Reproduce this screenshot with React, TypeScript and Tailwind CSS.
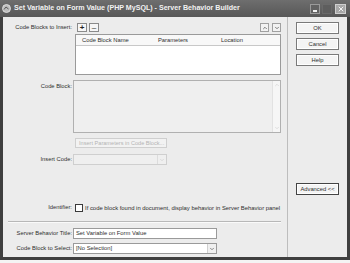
import { ChevronDown, ChevronUp, X } from "lucide-react";

const font = { fontFamily: '"Liberation Sans", Arial, sans-serif' };

function Label({ children }: { children: React.ReactNode }) {
  return (
    <div className="w-[70px] shrink-0 pr-[1px] text-right text-[5.8px] leading-none text-[#2e2e2e]">
      {children}
    </div>
  );
}

function SideButton({ children, className = "" }: { children: React.ReactNode; className?: string }) {
  return (
    <div
      className={`ml-[8px] flex h-[12px] w-[43px] items-center justify-center border border-[#7a7a7a] bg-[#f4f4f4] text-[5.8px] text-[#2e2e2e] shadow-[inset_0_0_0_1px_#fff] ${className}`}
    >
      {children}
    </div>
  );
}

function TitleBar() {
  return (
    <div className="flex h-[17px] shrink-0 items-center bg-gradient-to-b from-[#6e6e6e] to-[#575757] pl-[2px] pr-[4px]">
      <svg width="9" height="9" viewBox="0 0 9 9" className="shrink-0">
        <circle cx="4.5" cy="4.5" r="4" fill="#bdbdbd" stroke="#e8e8e8" strokeWidth="0.8" />
        <path d="M2 5.5 L4 3 L6.5 5" stroke="#555" strokeWidth="1" fill="none" />
      </svg>
      <span className="ml-[3px] whitespace-nowrap text-[7.1px] font-bold text-[#f2f2f2]">
        Set Variable on Form Value (PHP MySQL) - Server Behavior Builder
      </span>
      <div className="ml-auto flex items-center gap-[2px]">
        <div className="flex h-[10px] w-[10px] items-end justify-start border border-[#9a9a9a] bg-[#626262] pb-[1px] pl-[2px]">
          <div className="h-[2px] w-[4px] bg-[#f0f0f0]" />
        </div>
        <div className="h-[10px] w-[10px] border border-[#6a6a6a] bg-[#5e5e5e]" />
        <div className="ml-[1px] flex h-[10px] w-[11px] items-center justify-center border border-[#d0d0d0] bg-[#a8a8a8]">
          <X size={8} strokeWidth={3} color="#f4f4f4" />
        </div>
      </div>
    </div>
  );
}

export default function App() {
  return (
    <div className="h-[263px] w-[350px] overflow-hidden bg-[#f4f4f4]" style={font}>
      <div className="flex h-[260px] flex-col bg-[#3f3f3f]">
        <TitleBar />
        <div className="mx-[3px] mb-[3px] flex flex-1 bg-[#ececec]">
          {/* form area */}
          <div className="flex w-[285px] flex-col border-r border-[#bdbdbd]">
            <div className="mt-[6px] flex h-[9px] items-center">
              <Label>Code Blocks to Insert:</Label>
              <div className="ml-[4px] flex h-[9px] w-[10px] items-center justify-center border border-[#8a8a8a] bg-[#f6f6f6] text-[8px] font-bold leading-none text-[#222]">
                +
              </div>
              <div className="ml-[2px] flex h-[9px] w-[10px] items-center justify-center border border-[#8a8a8a] bg-[#f6f6f6] text-[8px] leading-none text-[#222]">
                –
              </div>
              <div className="ml-auto flex h-[9px] w-[9px] items-center justify-center border border-[#a0a0a0] bg-[#f2f2f2]">
                <ChevronUp size={6} strokeWidth={3} color="#555" />
              </div>
              <div className="ml-[3px] mr-[6px] flex h-[9px] w-[9px] items-center justify-center border border-[#a0a0a0] bg-[#f2f2f2]">
                <ChevronDown size={6} strokeWidth={3} color="#555" />
              </div>
            </div>

            <div className="mt-[2px] flex">
              <div className="w-[72px] shrink-0" />
              <div className="h-[41px] w-[206px] border border-[#9a9a9a] bg-white">
                <div className="grid h-[11px] grid-cols-[75px_63px_1fr] items-center border-b border-[#c8c8c8] bg-[#f8f8f8] text-[5.8px] text-[#2e2e2e]">
                  <span className="pl-[6px]">Code Block Name</span>
                  <span className="pl-[7px]">Parameters</span>
                  <span className="pl-[7px]">Location</span>
                </div>
              </div>
            </div>

            <div className="mt-[5px] flex">
              <div className="pt-[4px]">
                <Label>Code Block:</Label>
              </div>
              <div className="flex h-[53px] w-[208px] border border-[#b0b0b0] bg-[#efefef]">
                <div className="flex-1" />
                <div className="flex w-[8px] flex-col items-center justify-between border-l border-[#e2e2e2] bg-[#f6f6f6] py-[1px]">
                  <ChevronUp size={6} strokeWidth={2} color="#c4c4c4" />
                  <ChevronDown size={6} strokeWidth={2} color="#c4c4c4" />
                </div>
              </div>
            </div>

            <div className="mt-[5px] flex">
              <div className="w-[72px] shrink-0" />
              <div className="flex h-[10px] w-[92px] items-center border border-[#cfcfcf] bg-[#f2f2f2] pl-[3px] text-[5.6px] text-[#b4b4b4]">
                Insert Parameters in Code Block...
              </div>
            </div>

            <div className="mt-[6px] flex items-center">
              <Label>Insert Code:</Label>
              <div className="flex h-[11px] w-[94px] justify-end border border-[#cfcfcf] bg-[#efefef]">
                <div className="flex w-[9px] items-center justify-center border-l border-[#dcdcdc]">
                  <ChevronDown size={6} strokeWidth={2} color="#c4c4c4" />
                </div>
              </div>
            </div>

            <div className="mt-[38px] flex h-[10px] items-center">
              <Label>Identifier:</Label>
              <div className="ml-[2px] h-[8px] w-[8px] border border-[#3a3a3a] bg-white" />
              <span className="ml-[2px] whitespace-nowrap text-[5.9px] text-[#2e2e2e]">
                If code block found in document, display behavior in Server Behavior panel
              </span>
            </div>

            <div className="ml-[5px] mr-[6px] mt-[8px] border-t border-[#b8b8b8] shadow-[0_1px_0_#fafafa]" />

            <div className="mt-[6px] flex items-center">
              <Label>Server Behavior Title:</Label>
              <div className="flex h-[11px] w-[144px] items-center border border-[#9a9a9a] bg-white pl-[2px] text-[5.8px] text-[#2e2e2e]">
                Set Variable on Form Value
              </div>
            </div>

            <div className="mt-[4px] flex items-center">
              <Label>Code Block to Select:</Label>
              <div className="flex h-[11px] w-[144px] items-center border border-[#9a9a9a] bg-white pl-[2px] text-[5.8px] text-[#2e2e2e]">
                <span className="flex-1">[No Selection]</span>
                <div className="flex h-full w-[9px] items-center justify-center border-l border-[#d0d0d0] bg-[#f0f0f0]">
                  <ChevronDown size={6} strokeWidth={3} color="#666" />
                </div>
              </div>
            </div>
          </div>

          {/* buttons */}
          <div className="flex flex-1 flex-col">
            <SideButton className="mt-[5px]">OK</SideButton>
            <SideButton className="mt-[4px]">Cancel</SideButton>
            <SideButton className="mt-[4px]">Help</SideButton>
            <SideButton className="mt-[117px] h-[11px] border-[#444]">Advanced &lt;&lt;</SideButton>
          </div>
        </div>
      </div>
    </div>
  );
}
